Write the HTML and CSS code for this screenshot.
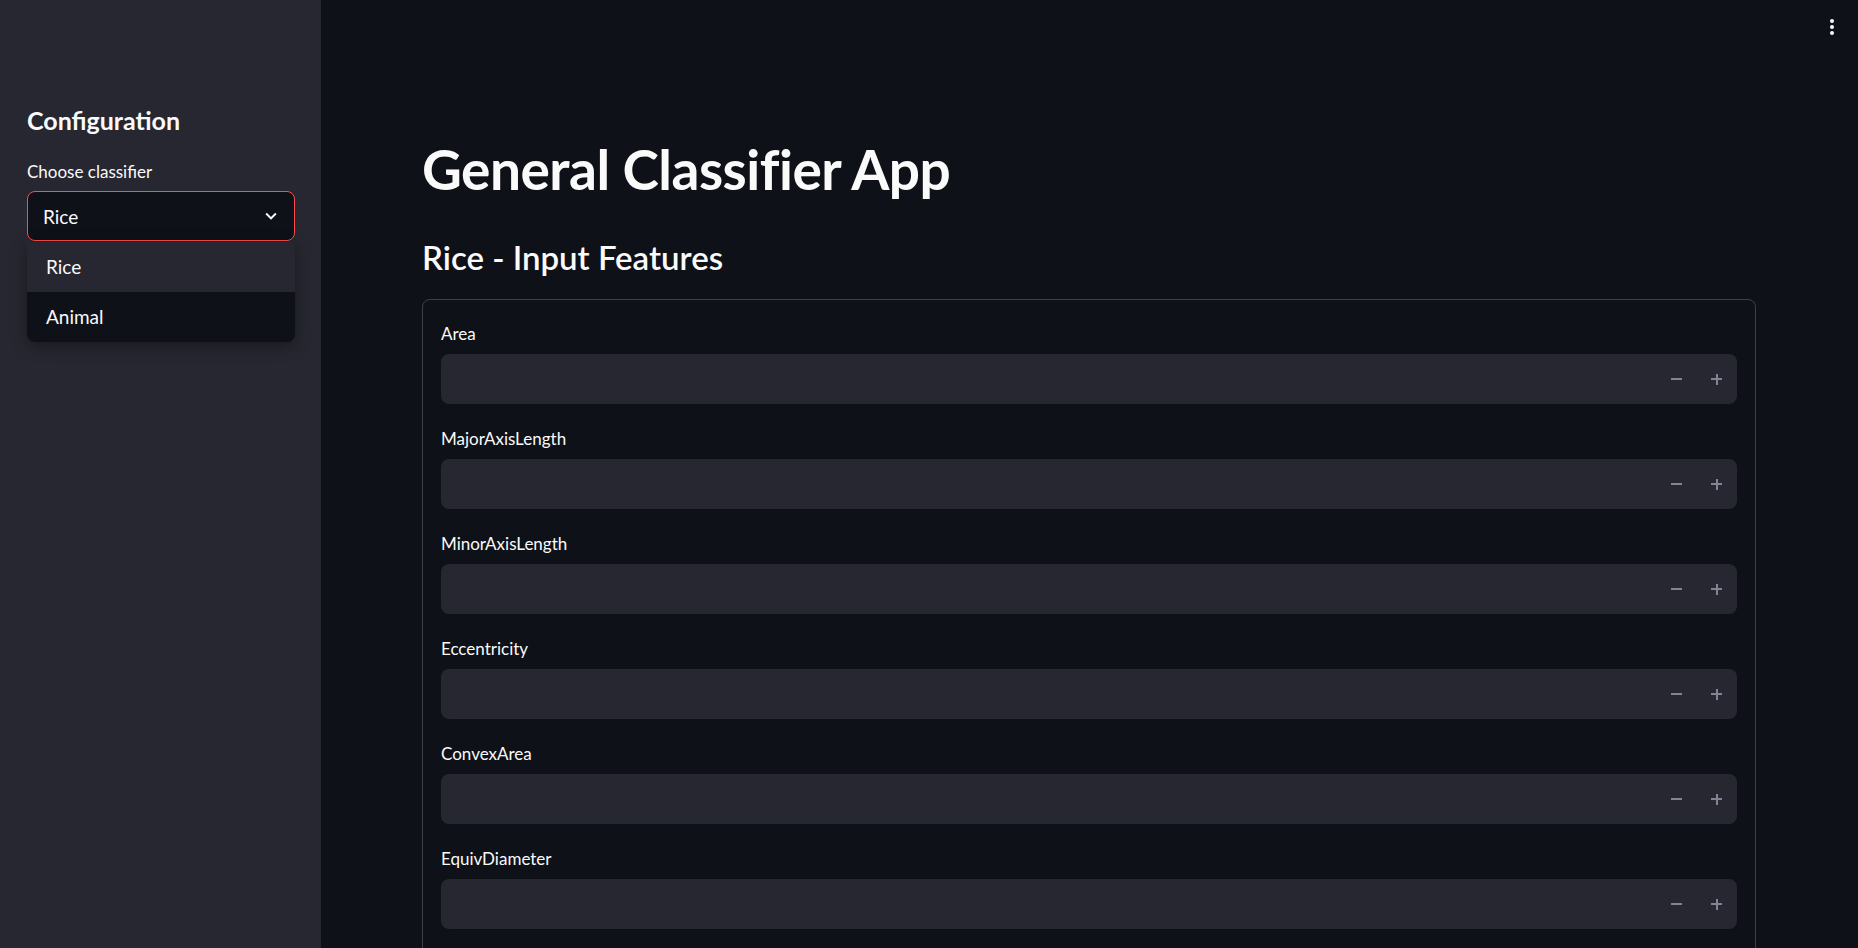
FILE: index.html
```html
<!DOCTYPE html>
<html lang="en">
<head>
  <meta charset="UTF-8" />
  <title>General Classifier App</title>
  <link rel="stylesheet" href="styles.css">
</head>
<body>
  <div class="app">
    <aside class="sidebar">
      <h2 class="side-title">Configuration</h2>
      <div class="side-label">Choose classifier</div>
      <div class="select">
        <span>Rice</span>
        <svg class="chev" viewBox="0 0 24 24" width="22" height="22"><path d="M16.59 8.59L12 13.17 7.41 8.59 6 10l6 6 6-6z" fill="#fafafa"/></svg>
        <ul class="menu">
          <li class="active">Rice</li>
          <li>Animal</li>
        </ul>
      </div>
    </aside>

    <main class="main">
      <button class="kebab"><span></span><span></span><span></span></button>
      <h1>General Classifier App</h1>
      <h3>Rice - Input Features</h3>
      <div class="form">
        <div class="field"><label>Area</label><div class="num"><div class="steps"><b class="minus"></b><b class="plus"></b></div></div></div>
        <div class="field"><label>MajorAxisLength</label><div class="num"><div class="steps"><b class="minus"></b><b class="plus"></b></div></div></div>
        <div class="field"><label>MinorAxisLength</label><div class="num"><div class="steps"><b class="minus"></b><b class="plus"></b></div></div></div>
        <div class="field"><label>Eccentricity</label><div class="num"><div class="steps"><b class="minus"></b><b class="plus"></b></div></div></div>
        <div class="field"><label>ConvexArea</label><div class="num"><div class="steps"><b class="minus"></b><b class="plus"></b></div></div></div>
        <div class="field"><label>EquivDiameter</label><div class="num"><div class="steps"><b class="minus"></b><b class="plus"></b></div></div></div>
      </div>
    </main>
  </div>
</body>
</html>
```

FILE: styles.css
```css
* { margin: 0; padding: 0; box-sizing: border-box; }
html, body { height: 100%; overflow: hidden; }
body {
  font-family: 'Lato', 'Open Sans', sans-serif;
  background: #0e1117;
  color: #fafafa;
}
.app { display: flex; height: 100%; }

.sidebar {
  width: 321px;
  flex-shrink: 0;
  background: #262730;
  padding: 105px 26px 0 27px;
}
.side-title { font-size: 25px; font-weight: 700; line-height: 30px; }
.side-label { font-size: 17px; line-height: 28px; margin-top: 23px; margin-bottom: 5px; }
.select {
  position: relative;
  height: 50px;
  border: 1px solid #ff4b4b;
  border-radius: 8px;
  background: #0e1117;
  display: flex;
  align-items: center;
  justify-content: space-between;
  padding: 0 12px 0 15px;
  font-size: 19px;
}
.chev { display: block; }
.menu {
  position: absolute;
  top: 50px;
  left: -1px;
  right: -1px;
  list-style: none;
  background: #0e1117;
  border-radius: 0 0 8px 8px;
  overflow: hidden;
  box-shadow: 0 4px 16px rgba(0,0,0,0.35);
}
.menu li { height: 50px; line-height: 50px; padding-left: 19px; font-size: 19px; }
.menu li.active { background: #262730; }

.main {
  flex: 1;
  position: relative;
  padding: 136px 102px 0 101px;
}
.kebab {
  position: absolute;
  top: 19px;
  right: 24px;
  background: none;
  border: none;
  display: flex;
  flex-direction: column;
  gap: 2px;
  padding: 0;
}
.kebab span { width: 4px; height: 4px; border-radius: 50%; background: #fafafa; }
h1 { font-size: 55px; font-weight: 700; line-height: 66px; letter-spacing: -0.5px; }
h3 { font-size: 33px; font-weight: 600; line-height: 42px; margin-top: 34px; }
.form {
  margin-top: 21px;
  border: 1px solid rgba(250,250,250,0.2);
  border-radius: 8px;
  padding: 19px 18px 60px;
  display: flex;
  flex-direction: column;
  gap: 20px;
}
.field label { display: block; font-size: 17px; line-height: 30px; margin-bottom: 5px; }
.num {
  height: 50px;
  background: #262730;
  border-radius: 8px;
  display: flex;
  justify-content: flex-end;
}
.steps { display: flex; margin-right: 1px; }
.steps b { width: 40px; height: 50px; position: relative; }
.steps b::before, .plus::after {
  content: "";
  position: absolute;
  left: 15px;
  top: 24px;
  width: 11px;
  height: 2px;
  background: #808495;
}
.plus::after { left: 19.5px; top: 19.5px; width: 2px; height: 11px; }
```
